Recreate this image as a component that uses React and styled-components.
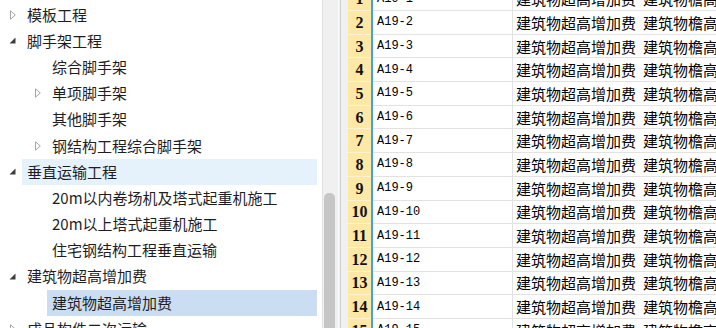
import React from 'react';
import styled, { createGlobalStyle } from 'styled-components';

const GlobalStyle = createGlobalStyle`
  html, body {
    margin: 0;
    padding: 0;
    background: #fff;
    overflow: hidden;
  }
  body {
    font-family: "Noto Sans CJK SC", "Noto Sans", sans-serif;
  }
`;

const treeItems = [
  { level: 0, text: '模板工程', toggle: 'closed' },
  { level: 0, text: '脚手架工程', toggle: 'open' },
  { level: 1, text: '综合脚手架' },
  { level: 1, text: '单项脚手架', toggle: 'closed' },
  { level: 1, text: '其他脚手架' },
  { level: 1, text: '钢结构工程综合脚手架', toggle: 'closed' },
  { level: 0, text: '垂直运输工程', toggle: 'open', hover: true },
  { level: 1, text: '20m以内卷场机及塔式起重机施工' },
  { level: 1, text: '20m以上塔式起重机施工' },
  { level: 1, text: '住宅钢结构工程垂直运输' },
  { level: 0, text: '建筑物超高增加费', toggle: 'open' },
  { level: 1, text: '建筑物超高增加费', selected: true },
  { level: 0, text: '成品构件二次运输', toggle: 'closed' },
];

const rows = Array.from({ length: 15 }, (_, i) => ({
  no: i + 1,
  code: `A19-${i + 1}`,
  name: '建筑物超高增加费',
  extra: '建筑物檐高',
}));

function Toggle({ kind }) {
  if (kind === 'open') {
    return (
      <svg width="7" height="7" viewBox="0 0 7 7">
        <path d="M6.5 0.5 L6.5 6.5 L0.5 6.5 Z" fill="#3c3c3c" />
      </svg>
    );
  }
  if (kind === 'closed') {
    return (
      <svg width="6" height="10" viewBox="0 0 6 10">
        <path d="M0.5 0.8 L5.3 5 L0.5 9.2 Z" fill="none" stroke="#a6a6a6" strokeWidth="1" />
      </svg>
    );
  }
  return null;
}

function App() {
  return (
    <>
      <GlobalStyle />
      <Page>
        <TreePanel>
          {treeItems.map((item, index) => (
            <TreeRow key={index} $level={item.level}>
              <ToggleBox $level={item.level}>
                <Toggle kind={item.toggle} />
              </ToggleBox>
              <Label $hover={item.hover} $selected={item.selected}>
                {item.text}
              </Label>
            </TreeRow>
          ))}
        </TreePanel>
        <ScrollTrack>
          <ScrollThumb />
        </ScrollTrack>
        <Splitter />
        <Grid>
          <GridBody>
            {rows.map((row) => (
              <GridRow key={row.no}>
                <RowNo>{row.no}</RowNo>
                <CodeCell>{row.code}</CodeCell>
                <NameCell>{row.name}</NameCell>
                <ExtraCell>{row.extra}</ExtraCell>
              </GridRow>
            ))}
          </GridBody>
        </Grid>
      </Page>
    </>
  );
}

const Page = styled.div`
  display: flex;
  width: 716px;
  height: 328px;
  overflow: hidden;
  background: #fff;
`;

const TreePanel = styled.div`
  width: 317px;
  padding: 2px 5px 0 0;
  flex-shrink: 0;
  overflow: hidden;
`;

const TreeRow = styled.div`
  display: flex;
  align-items: stretch;
  height: 26.2px;
  padding-left: ${(p) => p.$level * 25}px;
`;

const ToggleBox = styled.div`
  width: 22px;
  flex-shrink: 0;
  display: flex;
  align-items: center;
  justify-content: center;
  padding-left: ${(p) => (p.$level === 0 ? 3 : 4)}px;
  box-sizing: border-box;
  padding-bottom: 1px;
`;

const Label = styled.div`
  flex: 1;
  display: flex;
  align-items: center;
  padding: 0 0 2px 5px;
  font-size: 15px;
  color: #1e1e1e;
  white-space: nowrap;
  background: ${(p) => (p.$selected ? '#cbddf2' : p.$hover ? '#e5f1fb' : 'transparent')};
`;

const ScrollTrack = styled.div`
  width: 15px;
  flex-shrink: 0;
  background: #f0f0f0;
  border-left: 1px solid #e2e2e2;
  position: relative;
`;

const ScrollThumb = styled.div`
  position: absolute;
  left: 1px;
  top: 193px;
  width: 11px;
  height: 160px;
  background: #c6c6c6;
  border-radius: 5px;
`;

const Splitter = styled.div`
  flex-shrink: 0;
  width: 1px;
  background: #f3f3f3;
  border-left: 1px solid #f7f7f7;
  border-right: 1px solid #cfcfcf;
`;

const Grid = styled.div`
  flex: 1;
  overflow: hidden;
  background: #f0f0f0;
  padding-left: 7px;
`;

const GridBody = styled.div`
  margin-top: -12.7px;
  background: #fff;
`;

const GridRow = styled.div`
  display: flex;
  height: 23.7px;
  box-sizing: border-box;
  border-bottom: 1px solid #e2e2e2;
  white-space: nowrap;
`;

const RowNo = styled.div`
  width: 23px;
  flex-shrink: 0;
  background: #fee8a6;
  border-right: 2px solid #41a2dc;
  box-shadow: inset 0 -1px 0 #fff4d2;
  display: flex;
  align-items: center;
  justify-content: center;
  font-family: "Liberation Serif", serif;
  font-weight: bold;
  font-size: 16px;
  color: #111;
  margin-bottom: -1px;
`;

const CodeCell = styled.div`
  width: 135px;
  flex-shrink: 0;
  padding-left: 4px;
  border-right: 1px solid #e2e2e2;
  display: flex;
  align-items: center;
  font-family: "Liberation Mono", monospace;
  font-size: 12px;
  color: #000;
`;

const NameCell = styled.div`
  width: 124px;
  flex-shrink: 0;
  padding-left: 3px;
  display: flex;
  align-items: center;
  font-size: 15px;
  color: #000;
`;

const ExtraCell = styled.div`
  flex: 1;
  padding-left: 3px;
  display: flex;
  align-items: center;
  font-size: 15px;
  color: #000;
  overflow: hidden;
`;

export default App;
